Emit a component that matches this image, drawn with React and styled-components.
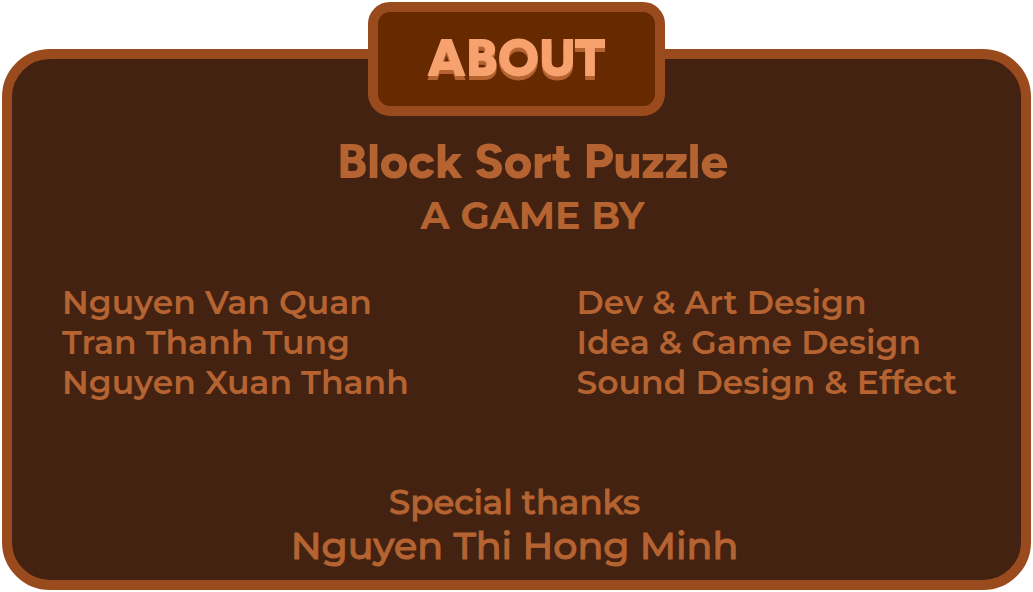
import React from "react";
import styled, { createGlobalStyle } from "styled-components";

const displayFont = 'Figtree, Inter, "Liberation Sans", sans-serif';
const textFont = 'Montserrat, Inter, "Liberation Sans", sans-serif';

const GlobalStyle = createGlobalStyle`
  *, *::before, *::after { box-sizing: border-box; }
  body {
    margin: 0;
    background: #ffffff;
    font-family: ${textFont};
  }
`;

const Page = styled.main`
  display: flex;
  flex-direction: column;
  padding: 2px;
`;

const Plaque = styled.h1`
  align-self: center;
  position: relative;
  z-index: 1;
  margin: 0 0 -67px;
  padding: 16px 49px 18px;
  border: 10px solid #994b1e;
  border-radius: 22px;
  background: #662900;
  color: #f7a26e;
  font-family: ${displayFont};
  font-size: 52px;
  font-weight: 900;
  line-height: 60px;
  text-shadow: 0 4px 0 #b56331;
`;

const Panel = styled.section`
  display: flex;
  flex-direction: column;
  padding: 76px 0 10px;
  border: 10px solid #994b1e;
  border-radius: 48px;
  background: #432212;
  color: #b56331;
`;

const Heading = styled.header`
  padding-left: 32px;
  text-align: center;
`;

const GameTitle = styled.h2`
  margin: 0 0 1px;
  font-family: ${displayFont};
  font-size: 49px;
  font-weight: 800;
  line-height: 52px;
`;

const Byline = styled.p`
  margin: 0;
  font-size: 38px;
  font-weight: 700;
  line-height: 56px;
`;

const Credits = styled.dl`
  display: grid;
  grid-template-columns: 1fr 1fr;
  column-gap: 70px;
  margin: 38px 0 80px;
  padding-left: 50px;
  font-size: 33px;
  font-weight: 600;
  line-height: 40px;
  white-space: nowrap;
`;

const Person = styled.dt`
  margin: 0;
`;

const Role = styled.dd`
  margin: 0;
`;

const Thanks = styled.footer`
  padding-right: 4px;
  text-align: center;
  font-weight: 500;
  -webkit-text-stroke: 1px currentColor;
`;

const ThanksLine = styled.p`
  margin: 0;
  font-size: ${({ $large }) => ($large ? "38px" : "34px")};
  line-height: ${({ $large }) => ($large ? "48px" : "40px")};
`;

const credits = [
  ["Nguyen Van Quan", "Dev & Art Design"],
  ["Tran Thanh Tung", "Idea & Game Design"],
  ["Nguyen Xuan Thanh", "Sound Design & Effect"],
];

export default function App() {
  return (
    <>
      <GlobalStyle />
      <Page>
        <Plaque>ABOUT</Plaque>
        <Panel>
          <Heading>
            <GameTitle>Block Sort Puzzle</GameTitle>
            <Byline>A GAME BY</Byline>
          </Heading>
          <Credits>
            {credits.map(([name, role]) => (
              <React.Fragment key={name}>
                <Person>{name}</Person>
                <Role>{role}</Role>
              </React.Fragment>
            ))}
          </Credits>
          <Thanks>
            <ThanksLine>Special thanks</ThanksLine>
            <ThanksLine $large>Nguyen Thi Hong Minh</ThanksLine>
          </Thanks>
        </Panel>
      </Page>
    </>
  );
}
